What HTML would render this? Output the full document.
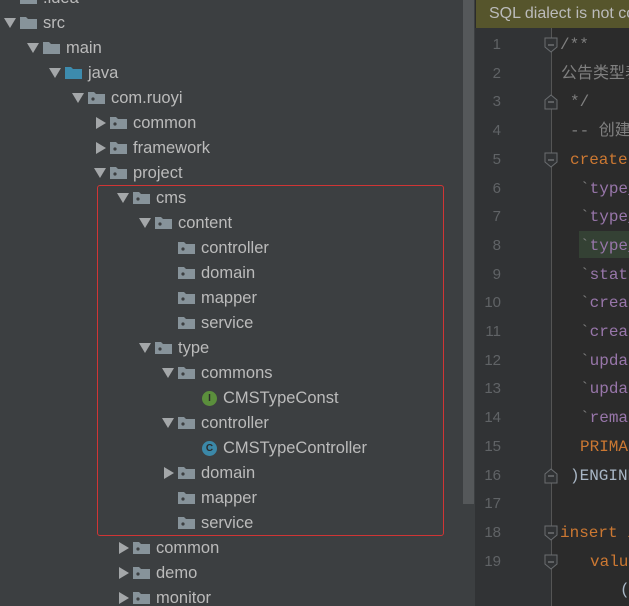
<!DOCTYPE html>
<html><head><meta charset="utf-8"><style>
*{margin:0;padding:0;box-sizing:border-box}
body{width:629px;height:606px;overflow:hidden;background:#3c3f41;position:relative;font-family:"Liberation Sans","Noto Sans CJK SC",sans-serif}
.r{position:absolute;height:25px;line-height:25px;font-size:16.5px;color:#bbbbbb;white-space:nowrap}
.ar{position:absolute;width:0;height:0}
.dn{border-left:6px solid transparent;border-right:6px solid transparent;border-top:10px solid #a4a7a9}
.rt{border-top:6px solid transparent;border-bottom:6px solid transparent;border-left:10px solid #a4a7a9}
.fd{position:absolute;width:17px;height:12px}
.ci{position:absolute;width:15px;height:15px;border-radius:50%;color:#2b2b2b;font-size:10px;line-height:15px;text-align:center;font-weight:bold}
.clip{position:absolute;left:475px;top:0;width:154px;height:606px;overflow:hidden;background:#2b2b2b}
.gut{position:absolute;left:0;top:28px;width:76px;height:578px;background:#313335}
.ln{position:absolute;left:0;width:26px;text-align:right;font-family:"Liberation Sans",sans-serif;font-size:15px;color:#606366}
.cd{position:absolute;font-family:"Liberation Mono","Noto Sans CJK SC",monospace;font-size:16px;white-space:pre;color:#a9b7c6}
.cm{color:#808080}.kw{color:#cc7832}.pu{color:#9876aa}
.fold{position:absolute;left:69px;width:14px;height:16px}
</style></head><body>
<div id="tree" style="position:absolute;left:0;top:0;width:463px;height:606px;overflow:hidden"></div>
<div style="position:absolute;left:97px;top:185px;width:347px;height:351px;border:1px solid #d03535;border-radius:3px"></div>
<div style="position:absolute;left:463px;top:0;width:11px;height:504px;background:#55585a"></div>
<div class="clip">
<div class="gut"></div>
<div style="position:absolute;left:76px;top:28px;width:1px;height:578px;background:#555"></div>
<div style="position:absolute;left:1px;top:0;width:153px;height:28px;background:#56552c;color:#bbbbbb;font-size:16px;line-height:28px;padding-left:13px;white-space:nowrap;overflow:hidden">SQL dialect is not configured</div>
<div style="position:absolute;left:104px;top:231px;width:50px;height:27px;background:#344134"></div>
<div id="code"></div>
</div>
<script>
var T=[
[".idea",0,""],["src",0,"d"],["main",1,"d"],["java",2,"d","j"],["com.ruoyi",3,"d","p"],
["common",4,"r","p"],["framework",4,"r","p"],["project",4,"d","p"],["cms",5,"d","p"],["content",6,"d","p"],
["controller",7,"","p"],["domain",7,"","p"],["mapper",7,"","p"],["service",7,"","p"],["type",6,"d","p"],
["commons",7,"d","p"],["CMSTypeConst",8,"","I"],["controller",7,"d","p"],["CMSTypeController",8,"","C"],
["domain",7,"r","p"],["mapper",7,"","p"],["service",7,"","p"],["common",5,"r","p"],["demo",5,"r","p"],["monitor",5,"r","p"]];
var h="";
T.forEach(function(t,i){
 var cy=-3+25*i, L=t[1], fx=Math.round(20+22.5*L), tx=Math.round(43+22.5*L);
 if(t[2]=="d")h+='<div class="ar dn" style="left:'+(fx-16)+'px;top:'+(cy-4)+'px"></div>';
 if(t[2]=="r")h+='<div class="ar rt" style="left:'+(fx-14)+'px;top:'+(cy-5)+'px"></div>';
 var k=t[3]||"";
 if(k=="I"||k=="C"){
  h+='<div class="ci" style="left:'+(fx+2)+'px;top:'+(cy-6)+'px;background:'+(k=="I"?"#5b8f3c":"#3b88a8")+'">'+k+'</div>';
 }else{
  var col=k=="j"?"#3d8bad":"#87939a";
  h+='<svg class="fd" style="left:'+fx+'px;top:'+(cy-5)+'px" viewBox="0 0 17 12"><path d="M0 0H6L8 2H17V12H0Z" fill="'+col+'"/>'+(k=="p"?'<circle cx="5" cy="7" r="1.6" fill="#3c3f41"/>':'')+'</svg>';
 }
 h+='<div class="r" style="left:'+tx+'px;top:'+(cy-11)+'px">'+t[0]+'</div>';
});
document.getElementById("tree").innerHTML=h;
var C=[
[85,'<span class="cm">/**</span>'],[86,'<span class="cm">公告类型表</span>'],[95,'<span class="cm">*/</span>'],
[95,'<span class="cm">-- 创建表</span>'],[95,'<span class="kw">create table</span>'],
[105,'<span class="cm">`</span><span class="pu">type_id</span>'],[105,'<span class="cm">`</span><span class="pu">type_name</span>'],[105,'<span class="cm">`</span><span class="pu">type_code</span>'],
[105,'<span class="cm">`</span><span class="pu">status</span>'],[105,'<span class="cm">`</span><span class="pu">create_by</span>'],[105,'<span class="cm">`</span><span class="pu">create_time</span>'],
[105,'<span class="cm">`</span><span class="pu">update_by</span>'],[105,'<span class="cm">`</span><span class="pu">update_time</span>'],[105,'<span class="cm">`</span><span class="pu">remark</span>'],
[105,'<span class="kw">PRIMARY</span>'],[95,')ENGINE'],[0,''],[85,'<span class="kw">insert into</span>'],[115,'<span class="kw">values</span>'],[145,'(']];
var g="";
C.forEach(function(c,i){
 var cy=Math.round(45+28.7*i);
 if(i<19)g+='<div class="ln" style="top:'+(cy-9)+'px;line-height:18px">'+(i+1)+'</div>';
 if(c[0])g+='<div class="cd" style="left:'+c[0]+'px;top:'+(cy-10)+'px;line-height:20px">'+c[1]+'</div>';
});
[[0,1],[2,0],[4,1],[15,0],[17,1],[18,1]].forEach(function(f){
 var cy=Math.round(45+28.7*f[0]);
 var d=f[1]?"M1 1H13V10L7 15L1 10Z":"M1 15H13V6L7 1L1 6Z";
 g+='<svg class="fold" style="top:'+(cy-8)+'px" viewBox="0 0 14 16"><path d="'+d+'" fill="#313335" stroke="#6a6d70"/><path d="M4 8H10" stroke="#8a8d90"/></svg>';
});
document.getElementById("code").innerHTML=g;
</script>
</body></html>
